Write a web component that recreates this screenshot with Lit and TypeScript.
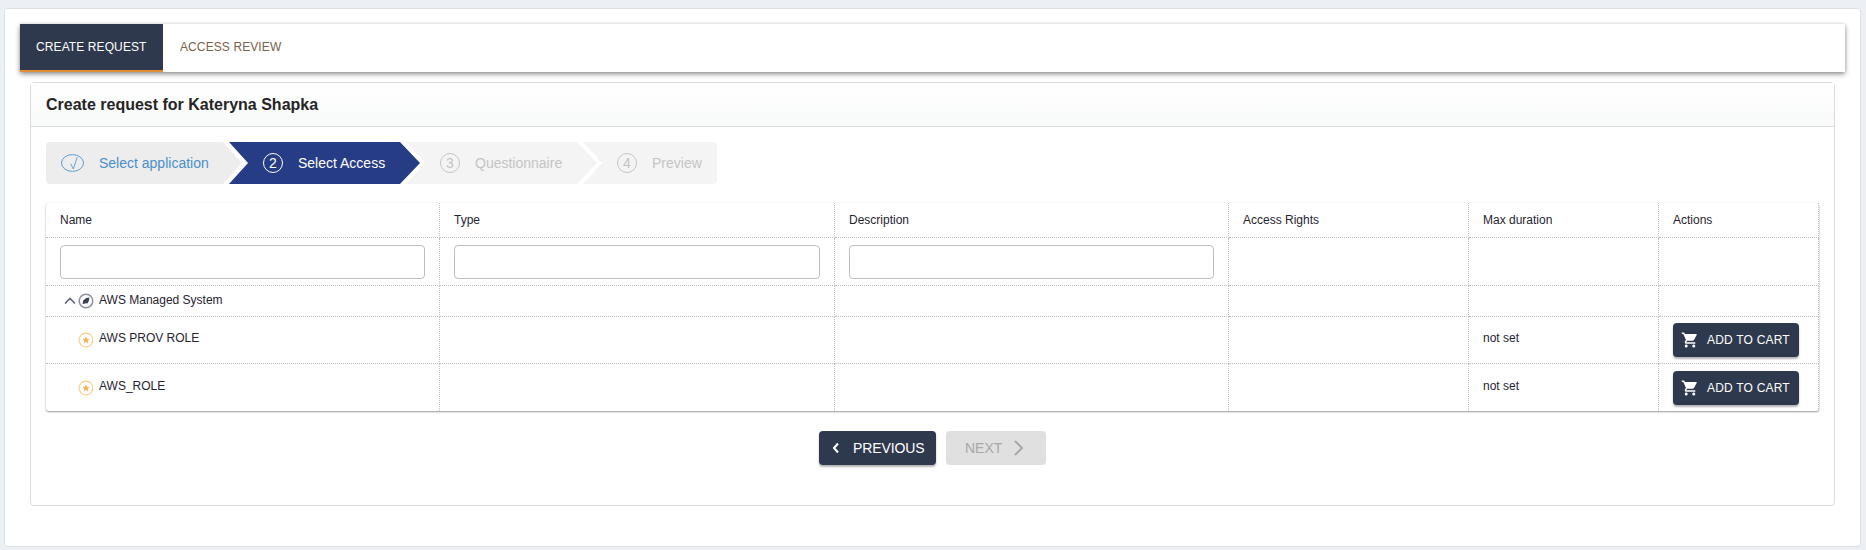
import { LitElement, html, css, svg } from "lit";
import { customElement } from "lit/decorators.js";

const cart = svg`<path fill="currentColor" d="M7 18c-1.1 0-1.99.9-1.99 2S5.9 22 7 22s2-.9 2-2-.9-2-2-2zM1 2v2h2l3.6 7.59-1.35 2.45c-.16.28-.25.61-.25.96 0 1.1.9 2 2 2h12v-2H7.42c-.14 0-.25-.11-.25-.25l.03-.12.9-1.63h7.45c.75 0 1.41-.41 1.75-1.03l3.58-6.49A1 1 0 0 0 20 4H5.21l-.94-2H1zm16 16c-1.1 0-1.99.9-1.99 2s.89 2 1.99 2 2-.9 2-2-.9-2-2-2z"/>`;

@customElement("app-root")
export class AppRoot extends LitElement {
  static styles = css`
    :host { display: block; height: 550px; box-sizing: border-box; background: #ecf0f5; padding: 8px 5px 3px 4px; font-family: "Liberation Sans", Arial, sans-serif; color: #212529; overflow: hidden; }
    * { box-sizing: border-box; }
    .panel { height: 539px; background: #fff; border: 1px solid #dde1e6; border-radius: 3px; padding: 15px 15px 0 15px; }
    .tabs { display: flex; height: 48px; background: #fff; box-shadow: 0 2px 5px rgba(0,0,0,.45), 0 0 3px rgba(0,0,0,.08); font-size: 12px; letter-spacing: .1px; }
    .tab { display: flex; align-items: center; padding: 0 17px; color: #7a5f4c; border-bottom: 2px solid transparent; }
    .tab.active { background: #2f394e; color: #fff; border-bottom-color: #e08e35; width: 143px; padding: 0 16px; }
    .card { margin: 10px 10px 0 10px; height: 424px; border: 1px solid #dcdcdc; border-radius: 4px; }
    .card-head { height: 44px; display: flex; align-items: center; padding-left: 15px; font-size: 16px; font-weight: bold; color: #252525; background: linear-gradient(#fff, #f8f9f9); border-bottom: 1px solid #dcdcdc; }
    .card-body { padding: 15px 15px 0; }
    .steps { display: flex; height: 42px; font-size: 14px; }
    .step { display: flex; align-items: center; flex: none; }
    .step .num { width: 20px; height: 20px; border-radius: 50%; border: 1px solid currentColor; display: flex; align-items: center; justify-content: center; font-size: 14px; margin-right: 15px; }
    .s1 { width: 196px; padding-left: 15px; margin-right: -13px; background: #ededed; color: #4b8ec8; border-radius: 4px 0 0 4px; clip-path: polygon(0 0, 177px 0, 196px 50%, 177px 100%, 0 100%); }
    .s1 .check { margin-right: 14px; display: block; }
    .s2 { width: 191px; padding-left: 34px; margin-right: -14px; background: #263c85; color: #fff; clip-path: polygon(0 0, 171px 0, 191px 50%, 171px 100%, 0 100%, 19px 50%); }
    .s3 { width: 191px; padding-left: 34px; margin-right: -14px; background: #f4f4f4; color: #c4c4c4; clip-path: polygon(0 0, 171px 0, 191px 50%, 171px 100%, 0 100%, 19px 50%); }
    .s4 { width: 134px; padding-left: 34px; background: #f4f4f4; color: #c4c4c4; border-radius: 0 4px 4px 0; clip-path: polygon(0 0, 100% 0, 100% 100%, 0 100%, 19px 50%); }
    .table { margin-top: 19px; height: 208px; border-radius: 3px; box-shadow: 0 1px 2px rgba(0,0,0,.4), 0 0 1px rgba(0,0,0,.06); display: grid; grid-template-columns: 394px 395px 394px 240px 190px 160px; grid-template-rows: 35px 48px 31px 47px 47px; font-size: 12px; color: #1f2430; }
    .c { display: flex; align-items: center; padding-left: 14px; border-right: 1px dotted #c0c0c0; border-bottom: 1px dotted #c0c0c0; min-width: 0; }
    .c.end { border-bottom: none; }
    .c.filter { padding-right: 14px; }
    .up { margin-bottom: 4px; }
    .up1 { margin-bottom: 2px; }
    .input { width: 100%; height: 34px; border: 1px solid #bdbdbd; border-radius: 4px; background: #fff; }
    .c.tree { padding-left: 18px; }
    .chev { margin-right: 2px; }
    .c.leaf { padding-left: 32px; }
    .leaf svg, .tree svg { flex: none; }
    .ico { margin-right: 5px; }
    .btn { display: inline-flex; align-items: center; border-radius: 4px; background: #2f394e; color: #fff; height: 34px; box-shadow: 0 2px 2px rgba(0,0,0,.3); font-size: 12px; letter-spacing: .2px; }
    .cart { width: 126px; padding-left: 8px; gap: 8px; }
    .pager { display: flex; justify-content: center; gap: 10px; margin-top: 20px; }
    .prev { width: 117px; padding-left: 13px; gap: 13px; font-size: 14px; letter-spacing: -.1px; }
    .next { width: 100px; padding-left: 19px; gap: 12px; font-size: 14px; letter-spacing: 0; background: #e0e0e0; color: #a8a8a8; box-shadow: none; }
  `;

  private gear() {
    return html`<svg class="ico" width="16" height="16" viewBox="0 0 16 16"><circle cx="8" cy="8" r="6.8" fill="#fff" stroke="#8b90a0" stroke-width="1.5"/><path d="M4.6 10.8 5.2 7.6l3-2.6 3.2-.6-.4 3.2-1.6 2.8-2.4-.2-.8.8z" fill="#3a4256"/></svg>`;
  }
  private star() {
    return html`<svg class="ico" width="16" height="16" viewBox="0 0 16 16"><circle cx="8" cy="8" r="6.9" fill="#fff" stroke="#f9d08a" stroke-width="1.2"/><path d="m8 4.2 1 2.5 2.7.3-2 1.7.6 2.7L8 10.1l-2.3 1.3.6-2.7-2-1.7 2.7-.3z" fill="#efb45a"/></svg>`;
  }
  private row(name: string, end: boolean) {
    const e = end ? "end" : "";
    return html`
      <div class="c leaf ${e}">${this.star()}<span class="up">${name}</span></div>
      <div class="c ${e}"></div><div class="c ${e}"></div><div class="c ${e}"></div>
      <div class="c ${e}"><span class="up">not set</span></div>
      <div class="c ${e}"><span class="btn cart"><svg width="18" height="18" viewBox="0 0 24 24">${cart}</svg>ADD TO CART</span></div>`;
  }
  render() {
    const heads = ["Name", "Type", "Description", "Access Rights", "Max duration", "Actions"];
    return html`<div class="panel">
      <div class="tabs"><div class="tab active">CREATE REQUEST</div><div class="tab">ACCESS REVIEW</div></div>
      <div class="card">
        <div class="card-head">Create request for Kateryna Shapka</div>
        <div class="card-body">
          <div class="steps">
            <div class="step s1"><svg class="check" width="24" height="18" viewBox="0 0 24 18"><ellipse cx="11.5" cy="9" rx="11" ry="8.4" fill="none" stroke="#5f9bd0"/><path d="M9.7 9.8 12.3 15l4-12" fill="none" stroke="#5f9bd0" stroke-width=".9"/></svg>Select application</div>
            <div class="step s2"><span class="num">2</span>Select Access</div>
            <div class="step s3"><span class="num">3</span>Questionnaire</div>
            <div class="step s4"><span class="num">4</span>Preview</div>
          </div>
          <div class="table">
            ${heads.map((h) => html`<div class="c">${h}</div>`)}
            <div class="c filter"><div class="input"></div></div><div class="c filter"><div class="input"></div></div><div class="c filter"><div class="input"></div></div><div class="c"></div><div class="c"></div><div class="c"></div>
            <div class="c tree"><svg class="chev" width="12" height="8" viewBox="0 0 12 8"><path d="M1 6.5 6 1.5l5 5" fill="none" stroke="#5d6680" stroke-width="1.6"/></svg>${this.gear()}<span class="up1">AWS Managed System</span></div>
            <div class="c"></div><div class="c"></div><div class="c"></div><div class="c"></div><div class="c"></div>
            ${this.row("AWS PROV ROLE", false)}
            ${this.row("AWS_ROLE", true)}
          </div>
          <div class="pager">
            <span class="btn prev"><svg width="8" height="12" viewBox="0 0 8 12"><path d="M6 1.5 2 6l4 4.5" fill="none" stroke="#fff" stroke-width="2"/></svg>PREVIOUS</span>
            <span class="btn next">NEXT<svg width="12" height="18" viewBox="0 0 12 18"><path d="M1 2l7 7-7 7" fill="none" stroke="#a8a8a8" stroke-width="2"/></svg></span>
          </div>
        </div>
      </div>
    </div>`;
  }
}
